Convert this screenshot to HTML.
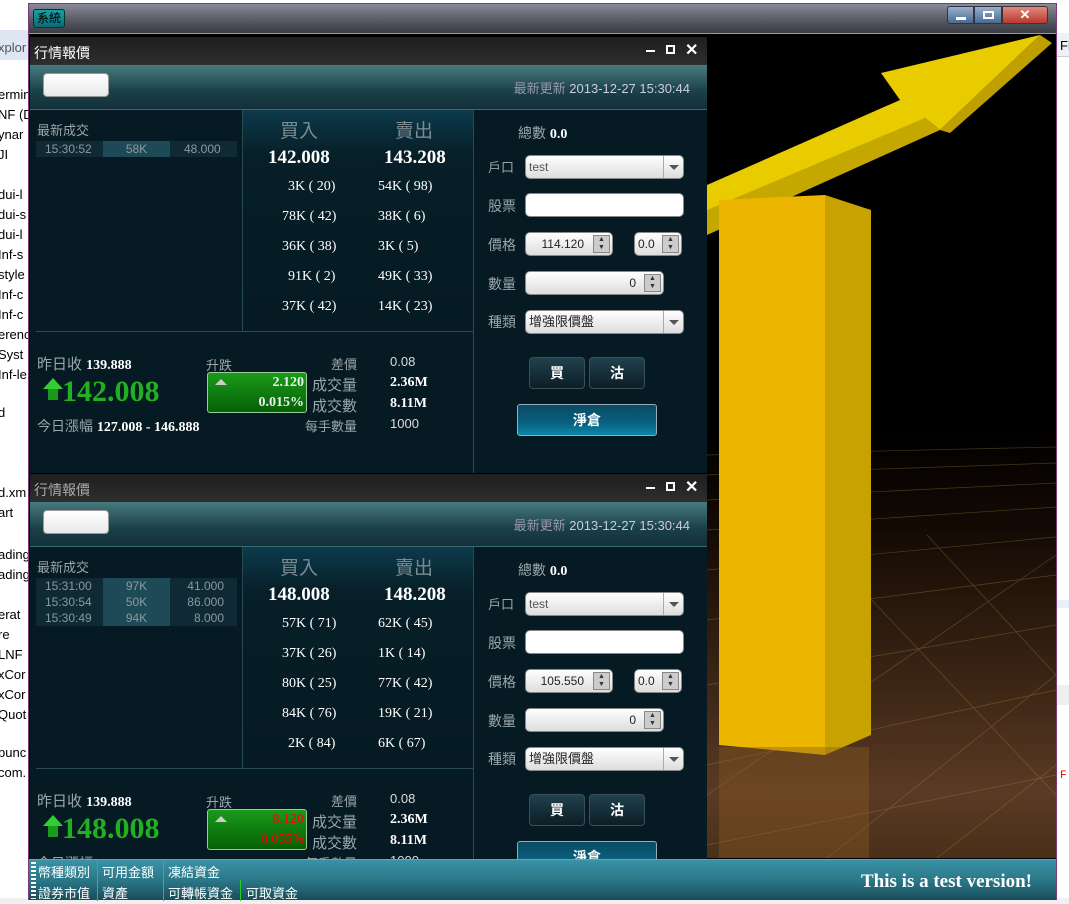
<!DOCTYPE html>
<html><head><meta charset="utf-8"><style>
*{margin:0;padding:0;box-sizing:border-box}
body{width:1069px;height:904px;overflow:hidden;position:relative;background:#fff;font-family:"Liberation Sans","Noto Sans CJK TC",sans-serif}
.a{position:absolute;white-space:nowrap}
.ecl{font-size:13px;color:#000;left:-2px}
.lbl{color:#9aa6aa;font-size:13px}
.w{color:#fff}
.num{font-family:"Liberation Serif","Noto Serif CJK SC",serif;font-weight:bold;color:#fff}
.ser{font-family:"Liberation Serif",serif;color:#fff;font-size:14px}
.panel{position:absolute;left:30px;width:677px;overflow:hidden}
.pt{position:absolute;left:0;top:0;width:677px;height:28px;background:linear-gradient(#1e1e1e,#2e2e2e);}
.ph{position:absolute;left:0;top:28px;width:677px;height:45px;background:linear-gradient(#477a7e,#1a4048 60%,#12303a);border-bottom:1px solid #3d6a70}
.pb{position:absolute;left:0;top:73px;width:677px;height:400px;background:#051a22}
.box{position:absolute;background:linear-gradient(#fff,#e8e8e8);border-radius:4px;border:1px solid #999}
.inp{position:absolute;height:24px;border-radius:5px;background:linear-gradient(#fff,#ddd);border:1px solid #888;font-size:12px;color:#222;line-height:22px}
.sp{position:absolute;width:17px;height:18px;border:1px solid #888;background:#ccc;font-size:7px;line-height:8px;text-align:center;color:#333}
.btn{position:absolute;width:56px;height:32px;border-radius:4px;border:1px solid #3a4f58;background:linear-gradient(#21414e,#0b1e26);color:#fff;font-weight:bold;font-size:14px;text-align:center;line-height:30px}
.jc{position:absolute;left:487px;width:140px;height:32px;border:1px solid #9ab;border-radius:3px;background:linear-gradient(#0a4a62,#0a6080 60%,#0c88a8);color:#fff;font-weight:bold;font-size:14px;text-align:center;line-height:30px}
</style></head><body>
<div class="a" style="left:0;top:30px;width:28px;height:30px;background:#dde6f2"></div>
<div class="a ecl" style="top:40px;color:#555">xplor</div>
<div class="a ecl" style="top:87px">ermin</div><div class="a ecl" style="top:107px">NF (D</div><div class="a ecl" style="top:127px">ynar</div><div class="a ecl" style="top:147px">JI</div>
<div class="a ecl" style="top:187px">dui-l</div><div class="a ecl" style="top:207px">dui-s</div><div class="a ecl" style="top:227px">dui-l</div><div class="a ecl" style="top:247px">Inf-s</div><div class="a ecl" style="top:267px">style</div><div class="a ecl" style="top:287px">Inf-c</div><div class="a ecl" style="top:307px">Inf-c</div><div class="a ecl" style="top:327px">erenc</div><div class="a ecl" style="top:347px">Syst</div><div class="a ecl" style="top:367px">Inf-le</div><div class="a ecl" style="top:405px">d</div>
<div class="a ecl" style="top:485px">d.xm</div><div class="a ecl" style="top:505px">art</div><div class="a ecl" style="top:547px">ading</div><div class="a ecl" style="top:567px">ading</div><div class="a ecl" style="top:607px">erat</div><div class="a ecl" style="top:627px">re</div><div class="a ecl" style="top:647px">LNF</div><div class="a ecl" style="top:667px">xCor</div><div class="a ecl" style="top:687px">xCor</div><div class="a ecl" style="top:707px">Quot</div><div class="a ecl" style="top:745px">bunc</div><div class="a ecl" style="top:765px">com.</div>
<div class="a" style="left:1056px;top:33px;width:13px;height:24px;background:#eef2f8;border-bottom:1px solid #ccc"></div>
<div class="a ecl" style="left:1060px;top:38px">Fl</div>
<div class="a" style="left:1056px;top:600px;width:13px;height:8px;background:#e8effa"></div>
<div class="a" style="left:1056px;top:685px;width:13px;height:20px;background:#eee"></div>
<div class="a" style="left:1060px;top:770px;color:#e00;font-size:11px;font-family:'Liberation Mono'">F</div>
<div class="a" style="left:0;top:898px;width:1069px;height:6px;background:#f0f0f0"></div>

<div class="a" style="left:28px;top:3px;width:1029px;height:897px;border:1px solid #7a3a78;background:#000"></div>
<div class="a" style="left:29px;top:4px;width:1027px;height:30px;background:linear-gradient(#8a8c98,#5c5e68 50%,#3a3c44);border-bottom:1px solid #999"></div>
<div class="a" style="left:33px;top:9px;width:32px;height:19px;background:linear-gradient(#1aa0a8,#0a6a72);border:1px solid #033;border-radius:3px;font-size:12px;color:#000;text-align:center;line-height:17px">系統</div>
<div class="a" style="left:947px;top:6px;width:27px;height:18px;background:linear-gradient(#9ab0cc,#4a6a92);border:1px solid #334;border-radius:3px 0 0 3px"><div class="a" style="left:8px;top:10px;width:10px;height:3px;background:#fff"></div></div>
<div class="a" style="left:974px;top:6px;width:28px;height:18px;background:linear-gradient(#9ab0cc,#4a6a92);border:1px solid #334"><div class="a" style="left:8px;top:4px;width:11px;height:8px;border:2px solid #fff"></div></div>
<div class="a" style="left:1002px;top:6px;width:46px;height:18px;background:linear-gradient(#e08a80,#b83a2e);border:1px solid #433;border-radius:0 3px 3px 0;color:#fff;font-weight:bold;text-align:center;font-size:13px;line-height:16px">✕</div>

<div class="a" style="left:707px;top:35px;width:349px;height:823px;background:linear-gradient(#000 0%,#000 48%,#140a04 60%,#3a2414 78%,#5a3a24 92%,#4a3018 100%);overflow:hidden">
<svg width="349" height="823" style="position:absolute;left:0;top:0">
<g stroke="#b89a40" stroke-width="0.7" opacity="0.35" fill="none">
<line x1="0" y1="420" x2="349" y2="412"/><line x1="0" y1="440" x2="349" y2="428"/><line x1="0" y1="465" x2="349" y2="448"/><line x1="0" y1="495" x2="349" y2="472"/><line x1="0" y1="535" x2="349" y2="502"/><line x1="0" y1="585" x2="349" y2="540"/><line x1="0" y1="650" x2="349" y2="590"/><line x1="0" y1="730" x2="349" y2="655"/><line x1="0" y1="810" x2="349" y2="740"/>
<line x1="120" y1="823" x2="349" y2="640"/><line x1="230" y1="823" x2="349" y2="730"/><line x1="0" y1="760" x2="349" y2="520"/>
<line x1="160" y1="560" x2="349" y2="760"/><line x1="220" y1="500" x2="349" y2="640"/>
</g>
<polygon points="0,150 193,65 174,38 333,0 233,95 218,83 0,195" fill="#e8cc00"/>
<polygon points="0,175 218,83 233,95 0,200" fill="#c4a800"/>
<polygon points="333,0 345,8 243,98 233,95" fill="#c0a000"/>
<polygon points="12,165 118,160 118,720 12,710" fill="#ecb600"/>
<polygon points="118,160 164,175 164,700 118,720" fill="#c8a200"/>
<rect x="12" y="712" width="150" height="111" fill="#8a5a20" opacity="0.4"/>
</svg></div>

<!-- PANEL 1 -->
<div class="panel" style="top:37px;height:436px">
<div class="pt"><div class="a w" style="left:4px;top:6px;font-size:14px">行情報價</div>
<div class="a" style="left:616px;top:13px;width:9px;height:2px;background:#fff"></div><div class="a" style="left:636px;top:8px;width:9px;height:9px;border:2px solid #fff"></div><div class="a w" style="left:655px;top:3px;font-size:16px;font-weight:bold">✕</div></div>
<div class="ph"><div class="box" style="left:13px;top:8px;width:66px;height:24px"></div><div class="a" style="right:17px;top:13px;font-size:13px;color:#ccd"><span style="color:#99a">最新更新</span> 2013-12-27 15:30:44</div></div>
<div class="pb">
<div class="a lbl" style="left:7px;top:10px">最新成交</div>
<div class="a" style="left:6px;top:31px;width:201px;height:16px;background:#0f2a34;font-size:12px;color:#8a9a9e;line-height:16px"><span class="a" style="left:9px">15:30:52</span><span class="a" style="left:67px;width:67px;height:16px;background:#1e4a58;text-align:center">58K</span><span class="a" style="left:148px">48.000</span></div>
<div class="a" style="left:212px;top:0;width:231px;height:222px;background:linear-gradient(#0c3a4c,#071f28 20%,#051a22);border-left:1px solid #2a4a52"></div>
<div class="a" style="left:250px;top:6px;font-size:19px;color:#7a8a8e">買入</div><div class="a" style="left:365px;top:6px;font-size:19px;color:#7a8a8e">賣出</div>
<div class="a num" style="left:238px;top:37px;font-size:19px">142.008</div><div class="a num" style="left:354px;top:37px;font-size:19px">143.208</div>
<div class="a ser" style="left:258px;top:69px">3K ( 20)</div><div class="a ser" style="left:348px;top:69px">54K ( 98)</div>
<div class="a ser" style="left:252px;top:99px">78K ( 42)</div><div class="a ser" style="left:348px;top:99px">38K ( 6)</div>
<div class="a ser" style="left:252px;top:129px">36K ( 38)</div><div class="a ser" style="left:348px;top:129px">3K ( 5)</div>
<div class="a ser" style="left:258px;top:159px">91K ( 2)</div><div class="a ser" style="left:348px;top:159px">49K ( 33)</div>
<div class="a ser" style="left:252px;top:189px">37K ( 42)</div><div class="a ser" style="left:348px;top:189px">14K ( 23)</div>
<div class="a" style="left:6px;top:221px;width:437px;height:1px;background:#2a4a52"></div>
<div class="a" style="left:443px;top:0;width:1px;height:400px;background:#2a4a52"></div>
<div class="a lbl" style="left:7px;top:243px;font-size:15px">昨日收 <span class="num" style="font-size:14px">139.888</span></div>
<div class="a" style="left:13px;top:268px;width:0;height:0;border-left:10px solid transparent;border-right:10px solid transparent;border-bottom:11px solid #3c3"></div><div class="a" style="left:18px;top:279px;width:10px;height:11px;background:#1a9a1a"></div>
<div class="a num" style="left:32px;top:265px;font-size:30px;color:#22b022">142.008</div>
<div class="a lbl" style="left:7px;top:306px;font-size:14px">今日漲幅 <span class="num" style="font-size:14px">127.008 - 146.888</span></div>
<div class="a lbl" style="left:176px;top:245px">升跌</div>
<div class="a" style="left:177px;top:262px;width:100px;height:41px;background:linear-gradient(#1a9a1a,#066006);border:1px solid #9c9;border-radius:3px"><div class="a" style="left:7px;top:6px;border-left:6px solid transparent;border-right:6px solid transparent;border-bottom:6px solid #ccc"></div><div class="a num" style="right:2px;top:2px;font-size:14px;color:#eee">2.120</div><div class="a num" style="right:2px;top:22px;font-size:14px;color:#eee">0.015%</div></div>
<div class="a lbl" style="right:350px;top:244px">差價</div><div class="a" style="left:360px;top:244px;font-size:13px;color:#ddd">0.08</div>
<div class="a lbl" style="right:350px;top:264px;font-size:15px">成交量</div><div class="a num" style="left:360px;top:265px;font-size:14px">2.36M</div>
<div class="a lbl" style="right:350px;top:285px;font-size:15px">成交數</div><div class="a num" style="left:360px;top:286px;font-size:14px">8.11M</div>
<div class="a lbl" style="right:350px;top:306px">每手數量</div><div class="a" style="left:360px;top:306px;font-size:13px;color:#ddd">1000</div>
<div class="a lbl" style="left:488px;top:13px;font-size:14px">總數 <span class="num" style="font-size:14px">0.0</span></div>
<div class="a lbl" style="left:458px;top:47px">戶口</div><div class="inp" style="left:495px;top:45px;width:159px;padding-left:3px;color:#555">test<div class="a" style="right:0;top:0;width:20px;height:22px;border-left:1px solid #aaa"><div class="a" style="left:5px;top:9px;border-left:5px solid transparent;border-right:5px solid transparent;border-top:5px solid #555"></div></div></div>
<div class="a lbl" style="left:458px;top:86px;font-size:14px">股票</div><div class="inp" style="left:495px;top:83px;width:159px;background:#fff"></div>
<div class="a lbl" style="left:458px;top:125px;font-size:14px">價格</div><div class="inp" style="left:495px;top:122px;width:88px;text-align:right;padding-right:28px">114.120</div><div class="sp" style="left:563px;top:125px">▲<br>▼</div>
<div class="inp" style="left:604px;top:122px;width:48px;padding-left:3px">0.0</div><div class="sp" style="left:632px;top:125px">▲<br>▼</div>
<div class="a lbl" style="left:458px;top:164px;font-size:14px">數量</div><div class="inp" style="left:495px;top:161px;width:139px;text-align:right;padding-right:27px">0</div><div class="sp" style="left:614px;top:164px">▲<br>▼</div>
<div class="a lbl" style="left:458px;top:202px;font-size:14px">種類</div><div class="inp" style="left:495px;top:200px;width:159px;padding-left:3px;font-size:13px">增強限價盤<div class="a" style="right:0;top:0;width:20px;height:22px;border-left:1px solid #aaa"><div class="a" style="left:5px;top:9px;border-left:5px solid transparent;border-right:5px solid transparent;border-top:5px solid #555"></div></div></div>
<div class="btn" style="left:499px;top:247px">買</div><div class="btn" style="left:559px;top:247px">沽</div>
<div class="jc" style="top:294px">淨倉</div>
</div></div>

<!-- PANEL 2 -->
<div class="panel" style="top:474px;height:386px">
<div class="pt"><div class="a" style="left:4px;top:6px;font-size:14px;color:#aaa">行情報價</div>
<div class="a" style="left:616px;top:13px;width:9px;height:2px;background:#fff"></div><div class="a" style="left:636px;top:8px;width:9px;height:9px;border:2px solid #fff"></div><div class="a w" style="left:655px;top:3px;font-size:16px;font-weight:bold">✕</div></div>
<div class="ph"><div class="box" style="left:13px;top:8px;width:66px;height:24px"></div><div class="a" style="right:17px;top:13px;font-size:13px;color:#ccd"><span style="color:#99a">最新更新</span> 2013-12-27 15:30:44</div></div>
<div class="pb">
<div class="a lbl" style="left:7px;top:10px">最新成交</div>
<div class="a" style="left:6px;top:31px;width:201px;height:48px;background:#0f2a34;font-size:12px;color:#8a9a9e;line-height:16px"><span class="a" style="left:67px;width:67px;height:48px;background:#1e4a58"></span><span class="a" style="left:9px">15:31:00<br>15:30:54<br>15:30:49</span><span class="a" style="left:67px;width:67px;text-align:center">97K<br>50K<br>94K</span><span class="a" style="left:148px;text-align:right;width:40px">41.000<br>86.000<br>8.000</span></div>
<div class="a" style="left:212px;top:0;width:231px;height:222px;background:linear-gradient(#0c3a4c,#071f28 20%,#051a22);border-left:1px solid #2a4a52"></div>
<div class="a" style="left:250px;top:6px;font-size:19px;color:#7a8a8e">買入</div><div class="a" style="left:365px;top:6px;font-size:19px;color:#7a8a8e">賣出</div>
<div class="a num" style="left:238px;top:37px;font-size:19px">148.008</div><div class="a num" style="left:354px;top:37px;font-size:19px">148.208</div>
<div class="a ser" style="left:252px;top:69px">57K ( 71)</div><div class="a ser" style="left:348px;top:69px">62K ( 45)</div>
<div class="a ser" style="left:252px;top:99px">37K ( 26)</div><div class="a ser" style="left:348px;top:99px">1K ( 14)</div>
<div class="a ser" style="left:252px;top:129px">80K ( 25)</div><div class="a ser" style="left:348px;top:129px">77K ( 42)</div>
<div class="a ser" style="left:252px;top:159px">84K ( 76)</div><div class="a ser" style="left:348px;top:159px">19K ( 21)</div>
<div class="a ser" style="left:258px;top:189px">2K ( 84)</div><div class="a ser" style="left:348px;top:189px">6K ( 67)</div>
<div class="a" style="left:6px;top:221px;width:437px;height:1px;background:#2a4a52"></div>
<div class="a" style="left:443px;top:0;width:1px;height:400px;background:#2a4a52"></div>
<div class="a lbl" style="left:7px;top:243px;font-size:15px">昨日收 <span class="num" style="font-size:14px">139.888</span></div>
<div class="a" style="left:13px;top:268px;width:0;height:0;border-left:10px solid transparent;border-right:10px solid transparent;border-bottom:11px solid #3c3"></div><div class="a" style="left:18px;top:279px;width:10px;height:11px;background:#1a9a1a"></div>
<div class="a num" style="left:32px;top:265px;font-size:30px;color:#22b022">148.008</div>
<div class="a lbl" style="left:7px;top:306px;font-size:14px">今日漲幅 <span class="num" style="font-size:14px">133.008 - 151.888</span></div>
<div class="a lbl" style="left:176px;top:245px">升跌</div>
<div class="a" style="left:177px;top:262px;width:100px;height:41px;background:linear-gradient(#1a9a1a,#066006);border:1px solid #9c9;border-radius:3px"><div class="a" style="left:7px;top:6px;border-left:6px solid transparent;border-right:6px solid transparent;border-bottom:6px solid #ccc"></div><div class="a num" style="right:2px;top:2px;font-size:14px;color:#f00;font-weight:normal">8.120</div><div class="a num" style="right:2px;top:22px;font-size:14px;color:#f00;font-weight:normal">0.055%</div></div>
<div class="a lbl" style="right:350px;top:244px">差價</div><div class="a" style="left:360px;top:244px;font-size:13px;color:#ddd">0.08</div>
<div class="a lbl" style="right:350px;top:264px;font-size:15px">成交量</div><div class="a num" style="left:360px;top:265px;font-size:14px">2.36M</div>
<div class="a lbl" style="right:350px;top:285px;font-size:15px">成交數</div><div class="a num" style="left:360px;top:286px;font-size:14px">8.11M</div>
<div class="a lbl" style="right:350px;top:306px">每手數量</div><div class="a" style="left:360px;top:306px;font-size:13px;color:#ddd">1000</div>
<div class="a lbl" style="left:488px;top:13px;font-size:14px">總數 <span class="num" style="font-size:14px">0.0</span></div>
<div class="a lbl" style="left:458px;top:47px">戶口</div><div class="inp" style="left:495px;top:45px;width:159px;padding-left:3px;color:#555">test<div class="a" style="right:0;top:0;width:20px;height:22px;border-left:1px solid #aaa"><div class="a" style="left:5px;top:9px;border-left:5px solid transparent;border-right:5px solid transparent;border-top:5px solid #555"></div></div></div>
<div class="a lbl" style="left:458px;top:86px;font-size:14px">股票</div><div class="inp" style="left:495px;top:83px;width:159px;background:#fff"></div>
<div class="a lbl" style="left:458px;top:125px;font-size:14px">價格</div><div class="inp" style="left:495px;top:122px;width:88px;text-align:right;padding-right:28px">105.550</div><div class="sp" style="left:563px;top:125px">▲<br>▼</div>
<div class="inp" style="left:604px;top:122px;width:48px;padding-left:3px">0.0</div><div class="sp" style="left:632px;top:125px">▲<br>▼</div>
<div class="a lbl" style="left:458px;top:164px;font-size:14px">數量</div><div class="inp" style="left:495px;top:161px;width:139px;text-align:right;padding-right:27px">0</div><div class="sp" style="left:614px;top:164px">▲<br>▼</div>
<div class="a lbl" style="left:458px;top:202px;font-size:14px">種類</div><div class="inp" style="left:495px;top:200px;width:159px;padding-left:3px;font-size:13px">增強限價盤<div class="a" style="right:0;top:0;width:20px;height:22px;border-left:1px solid #aaa"><div class="a" style="left:5px;top:9px;border-left:5px solid transparent;border-right:5px solid transparent;border-top:5px solid #555"></div></div></div>
<div class="btn" style="left:499px;top:247px">買</div><div class="btn" style="left:559px;top:247px">沽</div>
<div class="jc" style="top:294px">淨倉</div>
</div></div>

<div class="a" style="left:29px;top:859px;width:1027px;height:41px;background:linear-gradient(#3a92a6,#2a7888 50%,#1a4c5a);border-top:1px solid #5ab">
<div class="a" style="left:2px;top:2px;width:5px;height:37px;background:repeating-linear-gradient(#fff 0 2px,transparent 2px 4px)"></div>
<div class="a w" style="left:9px;top:2px;font-size:13px">幣種類別</div><div class="a w" style="left:9px;top:23px;font-size:13px">證券市值</div>
<div class="a" style="left:68px;top:0;width:1px;height:41px;background:#2c2"></div>
<div class="a w" style="left:73px;top:2px;font-size:13px">可用金額</div><div class="a w" style="left:73px;top:23px;font-size:13px">資產</div>
<div class="a" style="left:134px;top:0;width:1px;height:41px;background:#2c2"></div>
<div class="a w" style="left:139px;top:2px;font-size:13px">凍結資金</div><div class="a w" style="left:139px;top:23px;font-size:13px">可轉帳資金</div>
<div class="a" style="left:211px;top:20px;width:1px;height:21px;background:#2c2"></div>
<div class="a w" style="left:217px;top:23px;font-size:13px">可取資金</div>
<div class="a num" style="right:24px;top:11px;font-size:19px">This is a test version!</div>
</div>
</body></html>
